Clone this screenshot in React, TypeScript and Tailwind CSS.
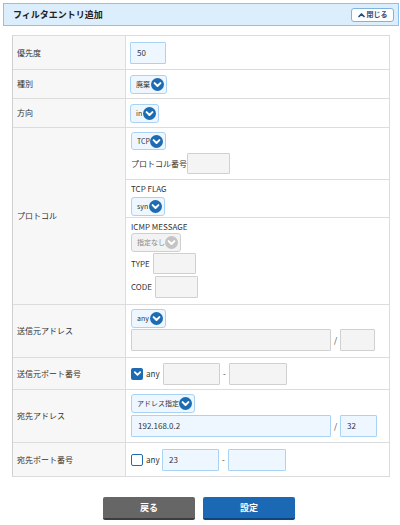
import React from "react";

function ChevronCircle({ disabled }: { disabled?: boolean }) {
  return (
    <svg width="13" height="13" viewBox="0 0 13 13" className="shrink-0">
      <circle cx="6.5" cy="6.5" r="6.5" fill={disabled ? "#c4c4c4" : "#1d6cb3"} />
      <path d="M3.6 5.1 L6.5 8 L9.4 5.1" fill="none" stroke="white" strokeWidth="2" strokeLinecap="round" strokeLinejoin="round" />
    </svg>
  );
}

function Select({ label, cls, disabled }: { label: string; cls: string; disabled?: boolean }) {
  return (
    <div
      className={
        "flex items-center justify-between rounded-[3px] border pl-[5px] pr-[2px] text-[7px] leading-none " +
        (disabled ? "border-[#cfcfcf] bg-[#f3f3f3] text-[#888] " : "border-[#a8d3f4] bg-[#eef7ff] text-[#333] ") +
        cls
      }
    >
      <span>{label}</span>
      <ChevronCircle disabled={disabled} />
    </div>
  );
}

function Input({ cls, blue, value }: { cls: string; blue?: boolean; value?: string }) {
  return (
    <div
      className={
        "flex items-center rounded-[1px] border px-[6px] text-[8px] text-[#333] " +
        (blue ? "border-[#a8d3f4] bg-[#eef7ff] " : "border-[#d0d0d0] bg-[#f4f4f4] ") +
        cls
      }
    >
      {value}
    </div>
  );
}

function Checkbox({ checked }: { checked?: boolean }) {
  return checked ? (
    <div className="flex h-[12px] w-[12px] items-center justify-center rounded-[2px] bg-[#1d6cb3]">
      <svg width="9" height="9" viewBox="0 0 9 9">
        <path d="M1.8 3.2 L4.5 5.9 L7.2 3.2" fill="none" stroke="white" strokeWidth="1.8" strokeLinecap="round" strokeLinejoin="round" />
      </svg>
    </div>
  ) : (
    <div className="h-[12px] w-[12px] rounded-[2px] border border-[#1d6cb3] bg-white" />
  );
}

function Row({ label, h, children, last }: { label: string; h: string; children: React.ReactNode; last?: boolean }) {
  return (
    <div className={"flex " + h + (last ? "" : " border-b border-[#dcdcdc]")}>
      <div className="flex w-[113px] shrink-0 items-center border-r border-[#dcdcdc] bg-[#f7f7f7] pl-[4px] text-[8px] text-[#333]">
        {label}
      </div>
      {children}
    </div>
  );
}

export default function App() {
  return (
    <div className="relative h-[525px] w-[400px] bg-white font-['Noto_Sans_CJK_JP','Noto_Sans',sans-serif] text-[#333]">
      <div className="h-[3px]" />
      <div className="ml-[3px] flex h-[23px] w-[396px] items-center justify-between border border-[#8ac3ee] bg-[#dcedfc] pl-[9px] pr-[4px]">
        <span className="text-[9px] font-bold text-[#222]">フィルタエントリ追加</span>
        <div className="flex h-[14px] w-[43px] items-center justify-center gap-[2px] rounded-[3px] border border-[#7fb3df] bg-white text-[7px] font-bold text-[#1f4f86]">
          <svg width="7" height="6" viewBox="0 0 7 6">
            <path d="M1 4.5 L3.5 2 L6 4.5" fill="none" stroke="#1f4f86" strokeWidth="1.7" strokeLinecap="round" strokeLinejoin="round" />
          </svg>
          <span>閉じる</span>
        </div>
      </div>

      <div className="ml-[12px] mt-[9px] w-[378px] border border-[#dcdcdc] border-l-[#d0d0d0]">
        <Row label="優先度" h="h-[34px]">
          <div className="flex flex-1 items-center pl-[4px]">
            <Input cls="h-[22px] w-[36px]" blue value="50" />
          </div>
        </Row>
        <Row label="種別" h="h-[29px]">
          <div className="flex flex-1 items-center pl-[4px]">
            <Select label="廃棄" cls="h-[19px] w-[37px]" />
          </div>
        </Row>
        <Row label="方向" h="h-[29px]">
          <div className="flex flex-1 items-center pl-[4px]">
            <Select label="in" cls="h-[19px] w-[29px]" />
          </div>
        </Row>
        <Row label="プロトコル" h="h-[177px]">
          <div className="flex flex-1 flex-col">
            <div className="h-[52px] border-b border-[#dcdcdc] pl-[5px] pt-[4px]">
              <Select label="TCP" cls="h-[18px] w-[35px]" />
              <div className="mt-[3px] flex items-center text-[8px]">
                <span>プロトコル番号</span>
                <Input cls="h-[21px] w-[43px]" />
              </div>
            </div>
            <div className="h-[38px] border-b border-[#dcdcdc] pl-[5px] pt-[3px]">
              <div className="text-[8px] leading-[12px]">TCP FLAG</div>
              <Select label="syn" cls="mt-[2px] h-[19px] w-[34px]" />
            </div>
            <div className="flex-1 pl-[5px] pt-[3px]">
              <div className="text-[8px] leading-[12px]">ICMP MESSAGE</div>
              <Select label="指定なし" cls="h-[19px] w-[50px]" disabled />
              <div className="mt-[1px] flex items-center text-[8px]">
                <span className="w-[22px]">TYPE</span>
                <Input cls="h-[21px] w-[43px]" />
              </div>
              <div className="mt-[2px] flex items-center text-[8px]">
                <span className="w-[24px]">CODE</span>
                <Input cls="h-[22px] w-[43px]" />
              </div>
            </div>
          </div>
        </Row>
        <Row label="送信元アドレス" h="h-[53px]">
          <div className="flex flex-1 flex-col pl-[5px] pt-[4px]">
            <Select label="any" cls="h-[19px] w-[35px]" />
            <div className="mt-[1px] flex items-center">
              <Input cls="h-[22px] w-[200px]" />
              <span className="w-[9px] text-center text-[8px]">/</span>
              <Input cls="h-[22px] w-[35px]" />
            </div>
          </div>
        </Row>
        <Row label="送信元ポート番号" h="h-[32px]">
          <div className="flex flex-1 items-center pl-[5px] text-[8px]">
            <Checkbox checked />
            <span className="ml-[3px] w-[17px]">any</span>
            <Input cls="h-[22px] w-[57px]" />
            <span className="w-[9px] text-center">-</span>
            <Input cls="h-[22px] w-[58px]" />
          </div>
        </Row>
        <Row label="宛先アドレス" h="h-[53px]">
          <div className="flex flex-1 flex-col pl-[5px] pt-[4px]">
            <Select label="アドレス指定" cls="h-[19px] w-[64px]" />
            <div className="mt-[2px] flex items-center">
              <Input cls="h-[22px] w-[200px]" blue value="192.168.0.2" />
              <span className="w-[9px] text-center text-[8px]">/</span>
              <Input cls="h-[22px] w-[37px]" blue value="32" />
            </div>
          </div>
        </Row>
        <Row label="宛先ポート番号" h="h-[33px]" last>
          <div className="flex flex-1 items-center pl-[5px] text-[8px]">
            <Checkbox />
            <span className="ml-[3px] w-[16px]">any</span>
            <Input cls="h-[22px] w-[57px]" blue value="23" />
            <span className="w-[9px] text-center">-</span>
            <Input cls="h-[22px] w-[58px]" blue />
          </div>
        </Row>
      </div>

      <div className="mt-[20px] flex justify-center gap-[8px] pr-[2px]">
        <div className="flex h-[23px] w-[92px] items-center justify-center rounded-[2px] border-b-2 border-[#3d3d3d] bg-[#666666] text-[9px] font-bold text-white">
          戻る
        </div>
        <div className="flex h-[23px] w-[92px] items-center justify-center rounded-[2px] border-b-2 border-[#0e4680] bg-[#1b69b5] text-[9px] font-bold text-white">
          設定
        </div>
      </div>
    </div>
  );
}
